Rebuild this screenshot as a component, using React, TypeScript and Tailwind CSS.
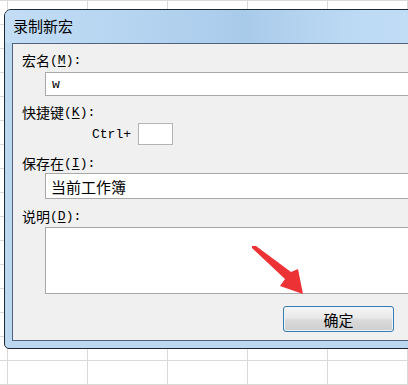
import React from "react";

const mono = "font-['Liberation_Mono',monospace]";

function Label({ text, k }: { text: string; k: string }) {
  return (
    <div className="h-[20px] pl-[9px] flex items-center text-[14px] leading-none text-black">
      <span>{text}</span>
      <span className={`${mono} text-[13px]`}>
        (<span className="underline underline-offset-2">{k}</span>):
      </span>
    </div>
  );
}

export default function App() {
  return (
    <div className="relative w-[408px] h-[385px] overflow-hidden bg-white bg-[linear-gradient(to_right,#d9d9d9_1px,transparent_1px),linear-gradient(to_bottom,#d9d9d9_1px,transparent_1px)] bg-[size:80px_24px] bg-[position:7px_0px] font-['Noto_Sans_CJK_SC',sans-serif]">
      <div className="absolute left-[4px] top-[9px] w-[440px] h-[340px] rounded-tl-[7px] rounded-bl-[5px] border border-[#1d2835] bg-[#bcd8f1] flex flex-col overflow-hidden">
        <div className="h-[33px] shrink-0 flex items-center pl-[8px] text-[15px] text-black bg-[linear-gradient(to_right,#c3ddf5,#b2d2ef_35%,#a9cbea_55%,#bddaf4_80%,#c3ddf5)]">
          录制新宏
        </div>
        <div className="ml-[7px] mb-[7px] flex-1 border border-[#51637a] bg-[#f0f0f0] flex flex-col">
          <div className="mt-[6px]">
            <Label text="宏名" k="M" />
          </div>
          <div className="mt-[2px] ml-[32px] w-[400px] h-[24px] border border-[#a8a8a8] bg-white flex items-center pl-[6px]">
            <span className={`${mono} text-[13px] leading-none`}>w</span>
          </div>
          <div className="mt-[6px]">
            <Label text="快捷键" k="K" />
          </div>
          <div className="mt-[1px] h-[22px] ml-[79px] flex items-center gap-[7px]">
            <span className={`${mono} text-[13px] leading-none`}>Ctrl+</span>
            <div className="w-[35px] h-[22px] border border-[#b4b4b4] bg-white" />
          </div>
          <div className="mt-[8px]">
            <Label text="保存在" k="I" />
          </div>
          <div className="ml-[32px] w-[400px] h-[26px] border border-[#a8a8a8] bg-white flex items-center pl-[5px] text-[15px] leading-none">
            当前工作簿
          </div>
          <div className="mt-[7px]">
            <Label text="说明" k="D" />
          </div>
          <div className="mt-[1px] ml-[32px] w-[400px] h-[67px] border border-[#a8a8a8] bg-white" />
          <div className="mt-[12px] ml-[270px] w-[111px] h-[26px] rounded-[3px] border border-[#3a7bb0] bg-[linear-gradient(to_bottom,#f5f5f5,#e9e9e9_45%,#dadada_55%,#cfcfcf)] shadow-[inset_0_0_0_1px_#e9f4fb] flex items-center justify-center text-[15px] leading-none text-black">
            确定
          </div>
        </div>
      </div>
      <svg className="absolute left-0 top-0 pointer-events-none" width="408" height="385" viewBox="0 0 408 385">
        <polygon
          points="252,246 256,246 291,272 298,269 303,294 280,286 285,279 252,248"
          fill="#ec3235"
        />
      </svg>
    </div>
  );
}
